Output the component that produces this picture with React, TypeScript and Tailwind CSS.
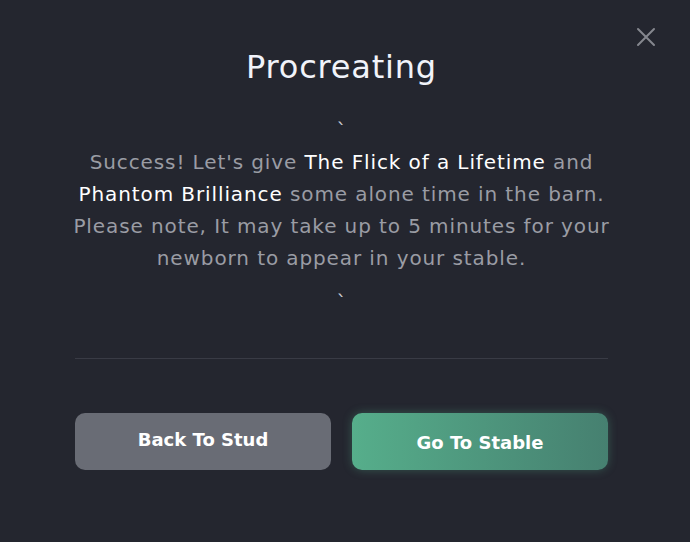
import React from "react";

export default function App() {
  return (
    <div
      className="relative w-[690px] h-[542px] bg-[#24262f] flex flex-col items-center overflow-hidden pr-[7px]"
      style={{ fontFamily: '"DejaVu Sans", "Open Sans", sans-serif' }}
    >
      <button className="absolute left-[636px] top-[27px] w-[20px] h-[20px] text-[#85878f]">
        <svg viewBox="0 0 20 20" width="20" height="20" fill="none" stroke="currentColor" strokeWidth="2" strokeLinecap="round">
          <path d="M2 2 L18 18 M18 2 L2 18" />
        </svg>
      </button>
      <h1 className="mt-[45px] text-[32px] leading-[44px] font-normal text-[#f1f3fa] tracking-[0.8px]">Procreating</h1>
      <div className="mt-[31px] text-[#c9cbd3] text-[20px] leading-[20px] h-[20px]">`</div>
      <p className="mt-[6px] w-[640px] text-center text-[20px] leading-[32px] font-normal text-[#9a9ca4] tracking-[0.9px]">
        Success! Let's give <span className="text-white">The Flick of a Lifetime</span> and
        <br />
        <span className="text-white">Phantom Brilliance</span> some alone time in the barn.
        <br />
        Please note, It may take up to 5 minutes for your
        <br />
        newborn to appear in your stable.
      </p>
      <div className="mt-[18px] text-[#c9cbd3] text-[20px] leading-[20px] h-[20px]">`</div>
      <div className="mt-[46px] w-[533px] h-px bg-[#393b45]" />
      <div className="mt-[54px] w-[533px] flex gap-[21px]">
        <button className="flex-1 h-[57px] rounded-[10px] bg-[#696c75] text-white text-[18px] font-bold pb-[4px]">
          Back To Stud
        </button>
        <button className="flex-1 h-[57px] rounded-[10px] bg-gradient-to-r from-[#56ae8b] to-[#468070] text-white text-[18px] font-bold pt-[2px] shadow-[0_0_10px_rgba(86,174,139,0.35)]">
          Go To Stable
        </button>
      </div>
    </div>
  );
}
